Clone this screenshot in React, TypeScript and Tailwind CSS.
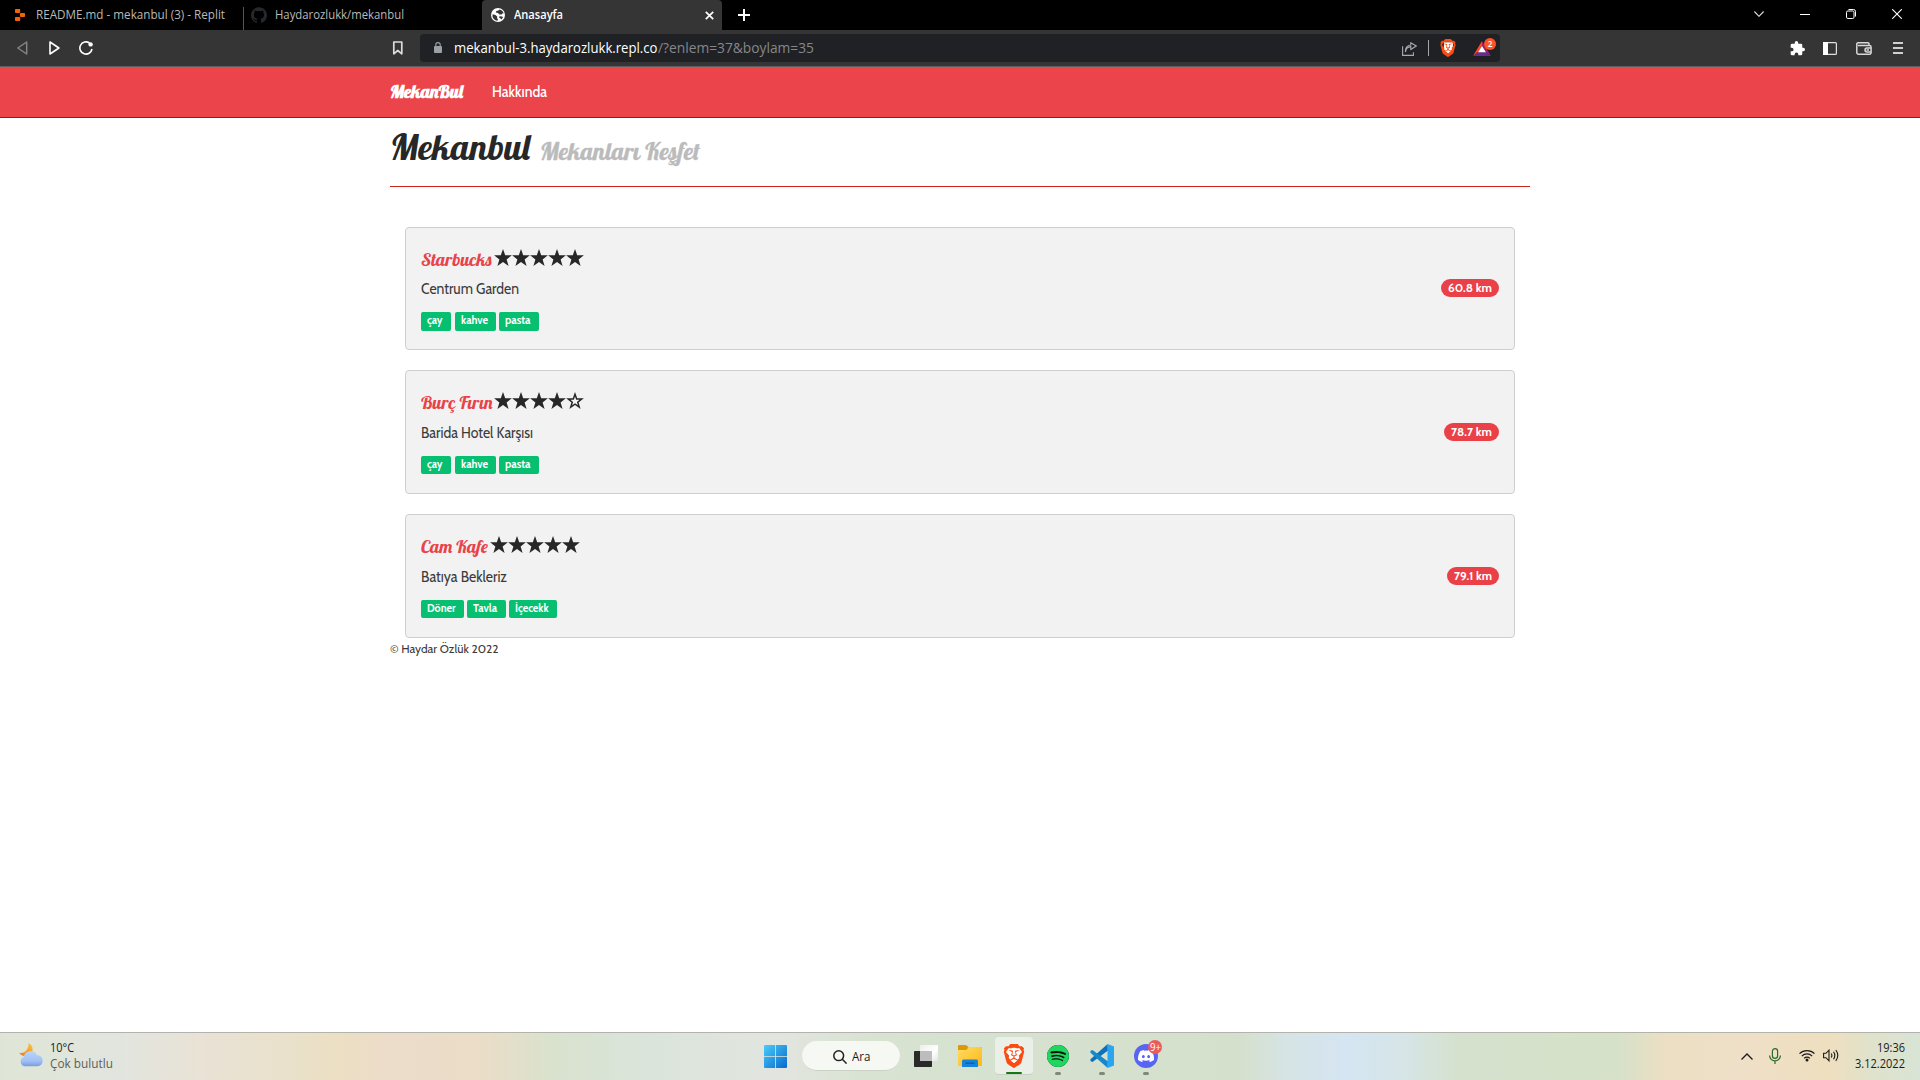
import { useLayoutEffect, useRef, type ReactNode } from "react";
import { SiBrave, SiDiscord, SiGithub, SiSpotify } from "react-icons/si";

/* Single-line text condensed or widened to an exact advance width. */
function Fit({ w, className = "", children }: { w: number; className?: string; children: ReactNode }) {
  const ref = useRef<HTMLSpanElement>(null);
  useLayoutEffect(() => {
    const el = ref.current;
    if (!el) return;
    el.style.transform = "none";
    el.style.transform = `scaleX(${w / el.getBoundingClientRect().width})`;
  }, [w]);
  return (
    <span className={`block shrink-0 whitespace-nowrap ${className}`} style={{ width: w }}>
      <span ref={ref} className="inline-block origin-left">
        {children}
      </span>
    </span>
  );
}

const UI = "font-['Open_Sans','Noto_Sans',sans-serif]";
const SCRIPT = "font-['Lobster','Liberation_Serif',serif]";

function TabStrip() {
  return (
    <div className={`flex h-[30px] bg-black text-[12px] leading-[30px] text-[#b9b9b9] ${UI}`}>
      <div className="flex w-[243px] pl-[15px]">
        <svg className="mt-[9px] h-3 w-[10px]" viewBox="0 0 10 12" fill="#f26207">
          <rect width="5.2" height="4" rx=".7" />
          <rect x="5" y="4" width="5" height="4" rx=".7" />
          <rect y="8" width="5.2" height="4" rx=".7" />
        </svg>
        <Fit w={189} className="ml-[11px]">README.md - mekanbul (3) - Replit</Fit>
      </div>
      <div className="mt-[7px] h-[23px] w-px bg-[#565656]" />
      <div className="flex w-[238px] pl-[7px]">
        <SiGithub className="mt-[7px] text-[#24292e]" size={16} />
        <Fit w={129} className="ml-2">Haydarozlukk/mekanbul</Fit>
      </div>
      <div className="flex w-[240px] rounded-t-[4px] bg-[#353535] pl-[9px] text-white">
        <svg className="mt-2 h-[14px] w-[14px]" viewBox="0 0 14 14">
          <circle cx="7" cy="7" r="7" fill="#fff" />
          <path d="M1.5 6.3 4.4 7l1.8 1.4-.2 1.5 1 1.9-.5 1A5.6 5.6 0 0 1 1.5 6.3ZM8.6 1.6 7 2.7 5.4 3l-.6 1.5L7 5l1.5 1.4 2 .1.8-1 1.5-.2a5.8 5.8 0 0 0-4.2-3.7ZM8.4 8.2l2.8.2.8 1.2-1.7 2-.9-1.4-1.2-.5Z" fill="#353535" />
        </svg>
        <Fit w={49} className="ml-[9px] font-semibold">Anasayfa</Fit>
        <svg className="ml-[142px] mt-[11px] h-[9px] w-[9px]" viewBox="0 0 9 9" stroke="#fff" strokeWidth="1.7">
          <path d="m.8.8 7.4 7.4M8.2.8.8 8.2" />
        </svg>
      </div>
      <svg className="ml-4 mt-[9px] h-3 w-3" viewBox="0 0 12 12" stroke="#fff" strokeWidth="2">
        <path d="M6 0v12M0 6h12" />
      </svg>
      <div className="ml-auto flex pr-[18px]">
        <svg className="mr-9 mt-[11px] h-[6px] w-[10px]" viewBox="0 0 10 6" fill="none" stroke="#ddd" strokeWidth="1.1">
          <path d="m.4.5 4.6 4.8L9.6.5" />
        </svg>
        <div className="mr-9 mt-[14px] h-px w-[10px] bg-white" />
        <svg className="mr-9 mt-[9px] h-[10px] w-[10px]" viewBox="0 0 10 10" fill="none" stroke="#fff">
          <rect x=".5" y="2" width="7.5" height="7.5" rx="1.3" />
          <path d="M2.5.5h5a2 2 0 0 1 2 2v5" />
        </svg>
        <svg className="mt-[9px] h-[10px] w-[10px]" viewBox="0 0 10 10" stroke="#fff" strokeWidth="1.1">
          <path d="m.2.2 9.6 9.6M9.8.2.2 9.8" />
        </svg>
      </div>
    </div>
  );
}

function BraveIcon({ className, size }: { className: string; size: number }) {
  return (
    <span className={`grid place-items-center ${className}`}>
      <svg className="col-start-1 row-start-1" width={size * 0.6} height={size * 0.75} viewBox="0 0 12 14">
        <path d="M1 1h10v9l-5 4-5-4Z" fill="#fff" />
      </svg>
      <SiBrave className="col-start-1 row-start-1 text-[#fb4a12]" size={size} />
    </span>
  );
}

function Toolbar() {
  return (
    <div className="flex h-[37px] border-b border-[#606060] bg-[#353535]">
      <svg className="ml-[17px] mt-[11px] h-[14px] w-[11px]" viewBox="0 0 11 14" fill="none" stroke="#858585" strokeWidth="1.5" strokeLinejoin="round">
        <path d="M9.7 1v12L.8 7Z" />
      </svg>
      <svg className="ml-[21px] mt-[11px] h-[14px] w-[11px]" viewBox="0 0 11 14" fill="none" stroke="#fff" strokeWidth="1.6" strokeLinejoin="round">
        <path d="M1 1v12l8.9-6Z" />
      </svg>
      <svg className="ml-[19px] mt-[11px] h-[14px] w-[15px]" viewBox="0 0 15 14" fill="none" stroke="#fff" strokeWidth="1.6">
        <path d="M10.5 2A6.1 6.1 0 1 0 13 8" />
        <circle cx="11.6" cy="3.4" r="2.2" fill="#fff" stroke="none" />
      </svg>
      <svg className="ml-[298px] mt-[11px] h-[14px] w-[12px]" viewBox="0 0 12 14" fill="none" stroke="#dcdcdc" strokeWidth="1.7">
        <path d="M1.8 1h8v11.8L5.8 9.5l-4 3.3Z" strokeLinejoin="round" />
      </svg>
      <div className={`ml-4 mt-1 flex h-7 w-[1080px] rounded-[4px] bg-[#202124] pl-[14px] text-[14px] leading-[27px] ${UI}`}>
        <svg className="mt-2 h-[11px] w-2" viewBox="0 0 8 11">
          <path d="M1.8 5V2.8a2.2 2.2 0 0 1 4.4 0V5" fill="none" stroke="#9aa0a6" strokeWidth="1.1" />
          <rect y="4" width="8" height="7" rx="1" fill="#9aa0a6" />
        </svg>
        <Fit w={203.5} className="ml-3 text-white">mekanbul-3.haydarozlukk.repl.co</Fit>
        <Fit w={156} className="text-[#85878a]">/?enlem=37&amp;boylam=35</Fit>
        <svg className="ml-[588.5px] mt-2 h-[14px] w-[15px]" viewBox="0 0 15 14" fill="none" stroke="#a9abae" strokeWidth="1.1">
          <path d="M.6 4.2v9.2h10.8v-3.2" />
          <path d="M3.5 10c.3-3.4 2-5.2 5.3-5.4V7.5L14.2 4 8.8.8V3C5 3.200 3.200 5.800 3.500 10Z" />
        </svg>
        <div className="ml-[11px] mt-[6px] h-4 w-px bg-[#a5a5a5]" />
        <BraveIcon className="ml-[10px] mt-[5px] h-[18px] w-[18px]" size={18} />
        <div className="relative ml-4 mt-[7px] h-[15px] w-[18px]">
          <svg viewBox="0 0 18 15" className="h-[15px] w-[18px]">
            <path d="M9 0 0 15l5.500-4.500L9 5Z" fill="#ff4724" />
            <path d="M9 0l9 15-5.500-4.500L9 5Z" fill="#9e1f63" />
            <path d="M0 15h18l-5.500-4.500h-7Z" fill="#662d91" />
            <path d="M9 5 5 11.200h8Z" fill="#fff" />
          </svg>
          <span className="absolute -top-[3px] left-[11px] h-3 w-3 rounded-full bg-[#fb542b] text-center text-[8px] font-semibold leading-[12px] text-white">2</span>
        </div>
      </div>
      <div className="ml-auto flex pr-[17px]">
        <svg className="mr-[18px] mt-[11px] h-[15px] w-[15px]" viewBox="1 1 22 22" fill="#fff">
          <path d="M20.500 11H19V7a2 2 0 0 0-2-2h-4V3.500a2.500 2.500 0 0 0-5 0V5H4a2 2 0 0 0-2 2v3.800h1.500a2.700 2.700 0 0 1 0 5.400H2V20a2 2 0 0 0 2 2h3.800v-1.500a2.700 2.700 0 0 1 5.400 0V22H17a2 2 0 0 0 2-2v-4h1.500a2.500 2.500 0 0 0 0-5Z" />
        </svg>
        <svg className="mr-[19px] mt-[12px] h-[13px] w-[14px]" viewBox="0 0 14 13">
          <rect x=".6" y=".6" width="12.800" height="11.800" rx="1" fill="none" stroke="#e0e0e0" strokeWidth="1.200" />
          <path d="M0 0h5v13H0Z" fill="#fff" />
        </svg>
        <svg className="mr-[21px] mt-[12px] h-[13px] w-4" viewBox="0 0 16 13" fill="none" stroke="#d8d8d8" strokeWidth="1.500">
          <path d="M13 3.500V1.800a1 1 0 0 0-1-1H2A1.300 1.300 0 0 0 .8 2.200v8.300A1.700 1.700 0 0 0 2.500 12.200H13.500a1.600 1.600 0 0 0 1.600-1.600V5.200A1.600 1.600 0 0 0 13.500 3.600H2" />
          <path d="M15 6h-4a2 2 0 0 0 0 4h4M10.500 8H13" />
        </svg>
        <div className="mt-[12px] flex w-[10px] flex-col gap-[3px]">
          <div className="h-0.5 bg-[#d0d0d0]" />
          <div className="h-0.5 bg-[#d0d0d0]" />
          <div className="h-0.5 bg-[#d0d0d0]" />
        </div>
      </div>
    </div>
  );
}

const STAR = "M9 0 11.200 6.300H17.900L12.600 10.400 14.600 16.900 9 13 3.400 16.900 5.400 10.400 .1 6.300H6.800Z";

function Stars({ count }: { count: number }) {
  return (
    <div className="-mt-px flex">
      {[1, 2, 3, 4, 5].map((n) => (
        <svg key={n} className="h-[17px] w-[18px]" viewBox="0 0 18 17">
          <path d={STAR} fill="#272727" />
          {n > count && <path d="M9 4.500 10.200 7.800H13.500L10.900 9.900 11.900 13.200 9 11.200 6.100 13.200 7.100 9.900 4.500 7.800H7.800Z" fill="#f2f2f2" />}
        </svg>
      ))}
    </div>
  );
}

type Tag = { label: string; box: number; text: number; gap: number };
type Venue = {
  name: string; nameW: number; stars: number; starGap: number; address: string; addressW: number;
  km: string; kmW: number; tags: Tag[]; first?: boolean;
};

const DRINKS: Tag[] = [
  { label: "çay", box: 30, text: 15.5, gap: 0 },
  { label: "kahve", box: 41, text: 27, gap: 4 },
  { label: "pasta", box: 40, text: 25.5, gap: 3 },
];

const VENUES: Venue[] = [
  { name: "Starbucks", nameW: 70.5, stars: 5, starGap: 2, address: "Centrum Garden", addressW: 98, km: "60.8 km", kmW: 44, tags: DRINKS, first: true },
  { name: "Burç Fırın", nameW: 71.5, stars: 4, starGap: 1.5, address: "Barida Hotel Karşısı", addressW: 112, km: "78.7 km", kmW: 41, tags: DRINKS },
  {
    name: "Cam Kafe", nameW: 67, stars: 5, starGap: 2, address: "Batıya Bekleriz", addressW: 86, km: "79.1 km", kmW: 38,
    tags: [
      { label: "Döner", box: 43, text: 28.5, gap: 0 },
      { label: "Tavla", box: 39, text: 24, gap: 3 },
      { label: "İçecekk", box: 48, text: 33.5, gap: 3 },
    ],
  },
];

function VenueCard({ v }: { v: Venue }) {
  return (
    <div className={`flex items-start justify-between rounded-[4px] border border-[#cfcfcf] bg-[#f2f2f2] px-[15px] ${v.first ? "h-[123px]" : "h-[124px]"}`}>
      <div className="pt-[17px]">
        <div className="flex h-7 items-start">
          <Fit w={v.nameW} className={`pt-px text-[18px] leading-7 text-[#e9424a] ${SCRIPT}`}>{v.name}</Fit>
          <div className="mt-[5px]" style={{ marginLeft: v.starGap }}>
            <Stars count={v.stars} />
          </div>
        </div>
        <Fit w={v.addressW} className={`text-[15px] leading-6 text-[#3a3a3a] ${v.first ? "mt-1" : "mt-[5px]"}`}>{v.address}</Fit>
        <div className="mt-[11px] flex">
          {v.tags.map((t) => (
            <div
              key={t.label}
              className={`rounded-[2px] bg-[#06bf71] pl-[6px] text-[11.25px] font-bold leading-[17px] text-white ${v.first ? "h-[19px]" : "h-[18px]"}`}
              style={{ width: t.box, marginLeft: t.gap }}
            >
              <Fit w={t.text}>{t.label}</Fit>
            </div>
          ))}
        </div>
      </div>
      <div className={`h-[18px] rounded-full bg-[#e94147] px-[7px] text-[12px] font-bold leading-[18px] text-white ${v.first ? "mt-[51px]" : "mt-[52px]"}`}>
        <Fit w={v.kmW}>{v.km}</Fit>
      </div>
    </div>
  );
}

function Page() {
  return (
    <div className="h-[965px] bg-white font-['Cabin','Lato',sans-serif]">
      <div className="h-[51px] border-b border-[#8f1a22] bg-[#eb444b]">
        <div className="mx-auto flex w-[1140px] text-white">
          <Fit w={73} className={`mt-[11px] text-[18px] font-bold leading-7 ${SCRIPT}`}>MekanBul</Fit>
          <Fit w={55} className="ml-[29px] mt-[13px] text-[15px] font-medium leading-6">Hakkında</Fit>
        </div>
      </div>
      <div className="mx-auto w-[1140px]">
        <div className="flex h-[69px] items-baseline border-b border-[#ce2418]">
          <Fit w={140} className={`text-[36px] leading-[58px] text-[#272727] ${SCRIPT}`}>Mekanbul</Fit>
          <Fit w={160} className={`ml-[10px] text-[23.400px] leading-[30px] text-[#bbb] [-webkit-text-stroke:0.3px_#bbb] ${SCRIPT}`}>Mekanları Keşfet</Fit>
        </div>
        <div className="flex flex-col gap-5 px-[15px] pt-10">
          {VENUES.map((v) => (
            <VenueCard key={v.name} v={v} />
          ))}
        </div>
        <Fit w={108.5} className="text-[12.500px] leading-[21px] text-[#3a3a3a]">© Haydar Özlük 2022</Fit>
      </div>
    </div>
  );
}

function Taskbar() {
  return (
    <div
      className={`flex h-12 border-t border-[#b3b3ad] text-[12px] text-[#1b1b1b] ${UI} bg-[linear-gradient(90deg,#dfe5d6_0px,#e2e5df_120px,#e9e2d5_200px,#e9e1cb_290px,#ecdfc3_335px,#ecdcca_390px,#ebddc8_480px,#d9e2cd_550px,#dae4da_640px,#e2e5df_780px,#d8e3d1_870px,#d5e2cf_1000px,#d5e0cc_1240px,#d6e4e6_1290px,#d5e5f2_1345px,#d6e5e8_1400px,#d5e1cd_1460px,#d7e1c9_1620px,#ecdfc3_1665px,#efdfc8_1740px,#eedfbf_1830px,#e0e2cb_1870px,#d8e4d5_1920px)]`}
    >
      <div className="flex w-[764px] pl-[19px]">
        <svg className="mt-[10px] h-6 w-6" viewBox="0 0 24 24">
          <defs>
            <linearGradient id="cloud" x1="0" y1="0" x2="0" y2="1">
              <stop offset="0" stopColor="#b8d3fb" />
              <stop offset=".65" stopColor="#a2c0f3" />
              <stop offset="1" stopColor="#769be0" />
            </linearGradient>
            <linearGradient id="moon" x1="1" y1="0" x2="0" y2="1">
              <stop offset="0" stopColor="#f8c63b" />
              <stop offset="1" stopColor="#ef7d17" />
            </linearGradient>
          </defs>
          <path d="M9.500.3C15 2.500 15 10 10 12.500 6 14 2 13 .2 9.800 6 11 10 6 9.500.3Z" fill="url(#moon)" />
          <path d="M5 23.300a5 5 0 0 1-.2-9.300 6.800 6.800 0 0 1 13-1.800A5.500 5.500 0 0 1 18.500 23.300Z" fill="url(#cloud)" />
        </svg>
        <div className="ml-[7px] pt-[7px] leading-4">
          <Fit w={24}>10°C</Fit>
          <Fit w={63} className="text-[#5d5f59]">Çok bulutlu</Fit>
        </div>
      </div>
      <svg className="mt-3 h-[23px] w-[23px]" viewBox="0 0 23 23">
        <defs>
          <linearGradient id="win" x1="0" y1="0" x2="1" y2="1">
            <stop offset="0" stopColor="#4ccbfb" />
            <stop offset="1" stopColor="#0669cc" />
          </linearGradient>
        </defs>
        <path d="M1 0h10.200v11.200H0V1a1 1 0 0 1 1-1ZM12 0h10a1 1 0 0 1 1 1v10.200H12ZM0 12h11.200v11H1a1 1 0 0 1-1-1ZM12 12h11v10a1 1 0 0 1-1 1H12Z" fill="url(#win)" />
      </svg>
      <div className="ml-[15px] mt-2 flex h-[30px] w-[98px] rounded-full border-b border-[#c9d2c4] bg-[#f6f8f4] pl-[31px]">
        <svg className="mt-[9px] h-[14px] w-[14px]" viewBox="0 0 14 14" fill="none" stroke="#222" strokeWidth="1.500">
          <circle cx="5.700" cy="5.700" r="4.900" />
          <path d="m9.300 9.300 4.300 4.300" />
        </svg>
        <Fit w={18.5} className="ml-[5px] leading-[31px]">Ara</Fit>
      </div>
      <svg className="ml-[14px] mt-3 h-[22px] w-6" viewBox="0 0 24 22">
        <defs>
          <linearGradient id="pane" x1="0" y1="0" x2="1" y2="1">
            <stop offset="0" stopColor="#eee" />
            <stop offset=".6" stopColor="#fff" />
            <stop offset="1" stopColor="#e4e4e4" />
          </linearGradient>
        </defs>
        <rect y="6" width="18" height="16" rx=".8" fill="#2a2a2a" />
        <rect x="6" width="18" height="16" rx=".8" fill="url(#pane)" />
        <path d="M6 6h12v10H6Z" fill="#bdbdbd" />
      </svg>
      <svg className="ml-5 mt-3 h-[22px] w-6" viewBox="0 0 24 22">
        <defs>
          <linearGradient id="folder" x1="0" y1="0" x2="1" y2="1">
            <stop offset="0" stopColor="#ffdb63" />
            <stop offset="1" stopColor="#fbb917" />
          </linearGradient>
        </defs>
        <path d="M0 1a1 1 0 0 1 1-1h7l2.500 2H23a1 1 0 0 1 1 1v6H0Z" fill="#dc9a0a" />
        <path d="M0 5h8.500l2-3H23a1 1 0 0 1 1 1v17a1 1 0 0 1-1 1H0Z" fill="url(#folder)" />
        <path d="M4 22v-6a1.600 1.600 0 0 1 1.600-1.600h12.800A1.600 1.600 0 0 1 20 16v6Z" fill="#1683d8" />
        <path d="M7.500 17.500h9v1.400h-9Z" fill="#0b5fb0" />
      </svg>
      <div className="ml-[13px] mt-1 flex h-[38px] w-[38px] flex-col items-center rounded-[4px] border-b border-[#c7d0c2] bg-[#eaf0e7]">
        <BraveIcon className="mt-[7px] h-6 w-6" size={24} />
        <div className="mt-1 h-[3px] w-4 rounded-full bg-[#107c10]" />
      </div>
      <div className="ml-[14px] mt-[12px] flex w-[22px] flex-col items-center">
        <span className="grid h-[22px] w-[22px] place-items-center rounded-full bg-[#111]">
          <SiSpotify className="text-[#1ed760]" size={22} />
        </span>
        <div className="mt-[5px] h-[3px] w-[6px] rounded-full bg-[#7f877b]" />
      </div>
      <div className="ml-[21px] mt-[11px] flex w-6 flex-col items-center">
        <svg className="h-6 w-6" viewBox="0 0 24 24">
          <path d="M.5 15.300 17.600 0 18 6.500 2.500 18 .4 16.900Z" fill="#0f72b8" />
          <path d="M.5 8.700 17.600 24 18 17.500 2.500 6 .4 7.100Z" fill="#1588cd" />
          <path d="M17.500 0 24 2.600v18.800L17.500 24Z" fill="#29a5f2" />
        </svg>
        <div className="mt-1 h-[3px] w-[6px] rounded-full bg-[#7f877b]" />
      </div>
      <div className="relative ml-5 mt-[11px] flex w-6 flex-col items-center">
        <span className="grid h-6 w-6 place-items-center rounded-full bg-[#5865f2]">
          <SiDiscord className="text-white" size={16} />
        </span>
        <div className="mt-1 h-[3px] w-[6px] rounded-full bg-[#7f877b]" />
        <span className="absolute -top-[4px] left-[14px] h-[14px] w-[14px] rounded-full bg-[#ec5a5e] pl-[2px] text-[10px] leading-[14px] text-white">
          <Fit w={11}>9+</Fit>
        </span>
      </div>
      <div className="ml-auto flex pr-[15px]">
        <svg className="mt-5 h-[7px] w-3" viewBox="0 0 12 7" fill="none" stroke="#1b1b1b" strokeWidth="1.300">
          <path d="M.5 6.500 6 1l5.500 5.500" />
        </svg>
        <svg className="ml-4 mt-[15px] h-4 w-3" viewBox="0 0 12 16" fill="none" stroke="#2a6a2c" strokeWidth="1.200">
          <rect x="3.400" y=".6" width="5.200" height="9.800" rx="2.600" />
          <path d="M.6 7.500a5.400 5.400 0 0 0 10.800 0M6 13v3" />
        </svg>
        <svg className="ml-[18px] mt-4 h-[13px] w-4" viewBox="0 0 16 13" fill="none" stroke="#1b1b1b" strokeWidth="1.200">
          <path d="M.5 4.700a10.600 10.600 0 0 1 15 0M2.800 7.100a7.400 7.400 0 0 1 10.400 0M5.100 9.400a4.100 4.100 0 0 1 5.800 0" />
          <circle cx="8" cy="11" r="1.500" fill="#1b1b1b" stroke="none" />
        </svg>
        <svg className="ml-2 mt-4 h-[13px] w-4" viewBox="0 0 16 13" fill="none" stroke="#1b1b1b" strokeWidth="1.100">
          <path d="M.6 4.300H3L6 1.200v10.600L3 8.700H.6Z" />
          <path d="M8.200 4.500q1.400 2 0 4M10.500 2.800q2.600 3.700 0 7.400M12.800 1q4 5.500 0 11" />
        </svg>
        <div className="ml-[16px] flex flex-col items-end pt-[7px] leading-4">
          <Fit w={28}>19:36</Fit>
          <Fit w={50}>3.12.2022</Fit>
        </div>
      </div>
    </div>
  );
}

export default function App() {
  return (
    <div className="h-[1080px] w-[1920px] overflow-hidden bg-white">
      <TabStrip />
      <Toolbar />
      <Page />
      <Taskbar />
    </div>
  );
}
